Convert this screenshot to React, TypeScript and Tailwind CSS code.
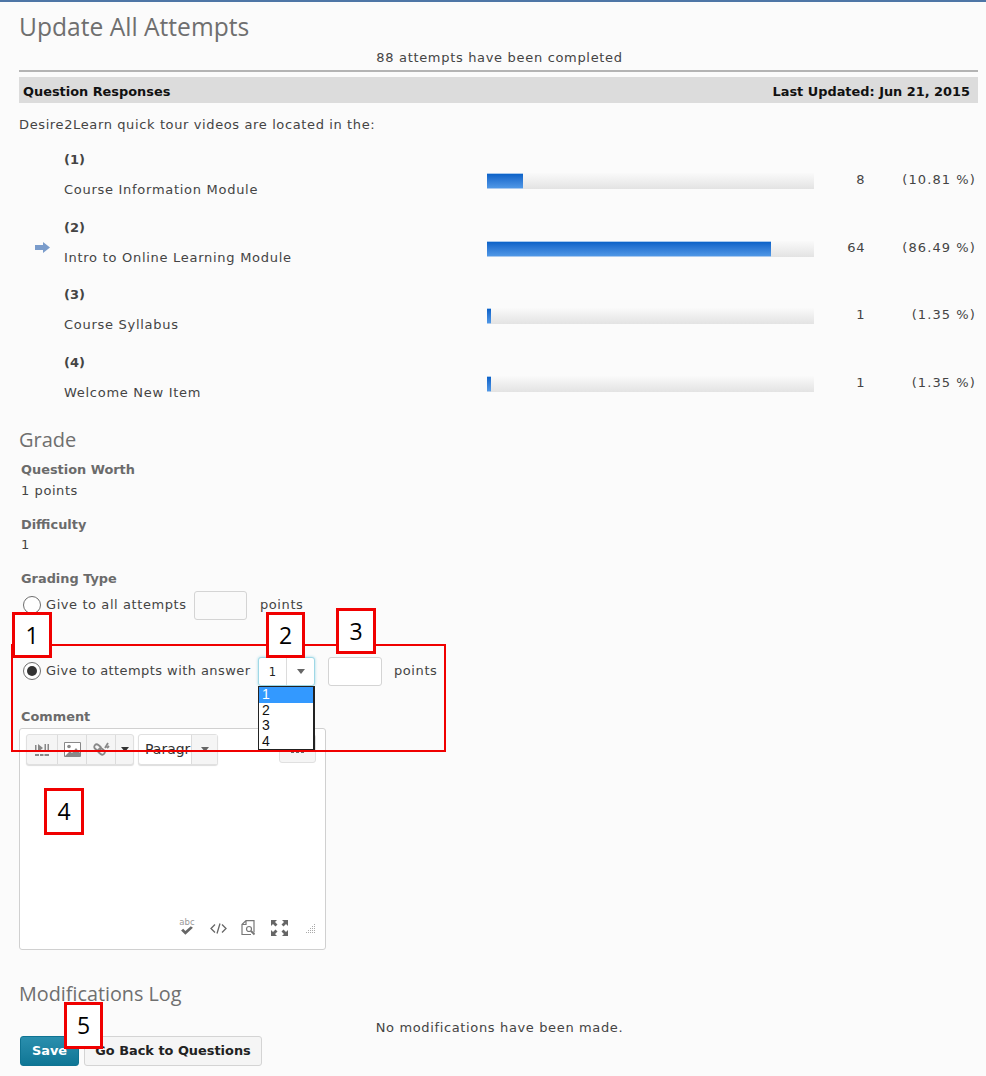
const answers = [
  { label: "(1)", name: "Course Information Module", pct: 11, count: "8", share: "(10.81 %)" },
  { label: "(2)", name: "Intro to Online Learning Module", pct: 87, count: "64", share: "(86.49 %)", correct: true },
  { label: "(3)", name: "Course Syllabus", pct: 1.2, count: "1", share: "(1.35 %)" },
  { label: "(4)", name: "Welcome New Item", pct: 1.2, count: "1", share: "(1.35 %)" },
];

const Radio = ({ checked }: { checked?: boolean }) => (
  <span className="flex h-[18px] w-[18px] shrink-0 items-center justify-center rounded-full border-[1.5px] border-[#6e6e6e] bg-white">
    {checked && <span className="h-[10px] w-[10px] rounded-full bg-[#333]" />}
  </span>
);

const Callout = ({ className, children }: { className: string; children: string }) => (
  <div className={`absolute z-20 flex items-center justify-center border-[3px] border-[#f00000] bg-white font-['Open_Sans',sans-serif] text-[23px] tracking-normal text-black ${className}`}>
    {children}
  </div>
);

const Caret = () => <span className="h-0 w-0 border-x-[4px] border-t-[5px] border-x-transparent border-t-[#666]" />;

const App = () => {
  return (
    <div className="relative h-[1076px] w-[986px] overflow-hidden border-t-2 border-[#4e76a6] bg-[#fbfbfb] px-[19px] font-['DejaVu_Sans',sans-serif] text-[13px] tracking-[0.58px] text-[#444]">
      <h1 className="h-[47px] pt-[8px] font-['Open_Sans',sans-serif] text-[24.6px] leading-[34px] tracking-normal text-[#6f6f6f]">Update All Attempts</h1>
      <p className="h-[17px] pl-[13px] text-center leading-[17px] tracking-[0.68px]">88 attempts have been completed</p>
      <div className="mt-[4px] h-[7px] w-[959px] border-t-2 border-[#b4b4b4]" />
      <div className="flex h-[26px] w-[959px] items-center justify-between bg-[#dcdcdc] px-[4px] pt-[3px] text-[12.9px] font-bold tracking-normal text-[#111]">
        <span>Question Responses</span>
        <span className="pr-[4px]">Last Updated: Jun 21, 2015</span>
      </div>
      <p className="mt-[13px] h-[17px] leading-[17px] tracking-[0.62px]">Desire2Learn quick tour videos are located in the:</p>

      <div className="mt-[9px] w-[959px]">
        {answers.map((a) => (
          <div key={a.label} className="flex h-[67.5px] items-start">
            <div className="flex h-[68px] w-[45px] shrink-0 items-center pl-[16px] pt-[8px]">
              {a.correct && (
                <svg width="15" height="11" viewBox="0 0 15 11">
                  <path d="M0 3h8V0l7 5.5-7 5.5V8H0z" fill="#7a9ccb" />
                </svg>
              )}
            </div>
            <div className="w-[423px] shrink-0 pt-[9px]">
              <div className="h-[17px] font-bold leading-[17px] tracking-normal">{a.label}</div>
              <div className="mt-[13px] h-[17px] whitespace-nowrap leading-[17px] tracking-[0.72px]">{a.name}</div>
            </div>
            <div className="mt-[31px] h-[16px] w-[327px] shrink-0 bg-gradient-to-b from-[#fafafa] to-[#e3e3e3]">
              <div
                className="h-full border-y border-[#a9c9ee] bg-gradient-to-b from-[#0a62c8] to-[#4f97e6]"
                style={{ width: `${a.pct}%` }}
              />
            </div>
            <div className="mt-[29px] w-[51px] shrink-0 text-right leading-[17px]">{a.count}</div>
            <div className="mt-[29px] w-[111px] shrink-0 whitespace-nowrap text-right leading-[17px] tracking-[1.1px]">{a.share}</div>
          </div>
        ))}
      </div>

      <h2 className="mt-[13px] h-[30px] font-['Open_Sans',sans-serif] text-[20px] leading-[30px] tracking-normal text-[#6f6f6f]">Grade</h2>
      <div className="pl-[2px]">
        <div className="mt-[6px] h-[17px] text-[12.9px] font-bold leading-[17px] tracking-normal text-[#6b6b6b]">Question Worth</div>
        <div className="mt-[4px] h-[17px] leading-[17px]">1 points</div>
        <div className="mt-[17px] h-[17px] text-[12.9px] font-bold leading-[17px] tracking-normal text-[#6b6b6b]">Difficulty</div>
        <div className="mt-[3px] h-[17px] leading-[17px]">1</div>
        <div className="mt-[17px] h-[17px] text-[12.9px] font-bold leading-[17px] tracking-normal text-[#6b6b6b]">Grading Type</div>
      </div>

      <div className="mt-[3px] flex h-[30px] items-center pl-[4px]">
        <Radio />
        <span className="ml-[5px] w-[148px] whitespace-nowrap">Give to all attempts</span>
        <span className="h-[29px] w-[53px] rounded-[3px] border border-[#d4d4d4] bg-[#fafafa]" />
        <span className="ml-[13px]">points</span>
      </div>

      <div className="relative mt-[36px] flex h-[30px] items-center pl-[4px]">
        <Radio checked />
        <span className="ml-[5px] w-[212px] whitespace-nowrap tracking-[0.43px]">Give to attempts with answer</span>
        <div className="flex h-[29px] w-[57px] items-center rounded-[3px] border border-[#9fd8e6] bg-white shadow-[0_0_3px_#9fd8e6]">
          <span className="w-[27px] pt-[3px] text-center text-[11.5px] tracking-normal text-[#222]">1</span>
          <span className="flex h-full flex-1 items-center justify-center border-l border-[#dcdcdc]">
            <Caret />
          </span>
        </div>
        <span className="ml-[13px] h-[29px] w-[54px] rounded-[3px] border border-[#d4d4d4] bg-white" />
        <span className="ml-[12px]">points</span>

        <div className="absolute left-[239px] top-[30px] z-10 w-[57px] border border-b-2 border-r-2 border-[#222] bg-white font-['Liberation_Sans',sans-serif] text-[14px] leading-[15.5px] tracking-normal text-[#111]">
          <div className="bg-[#3399ff] pl-[3px] text-white">1</div>
          <div className="pl-[3px]">2</div>
          <div className="pl-[3px]">3</div>
          <div className="pl-[3px]">4</div>
        </div>
      </div>

      <div className="mt-[22px] h-[17px] pl-[2px] text-[12.9px] font-bold leading-[17px] tracking-normal text-[#6b6b6b]">Comment</div>

      <div className="mt-[3px] h-[222px] w-[307px] rounded-[3px] border border-[#d0d0d0] bg-white px-[6px] pt-[5px]">
        <div className="flex items-start">
          <div className="flex h-[31px] w-[108px] rounded-[3px] border border-[#e0e0e0] bg-[#f5f5f5] shadow-[0_1px_1px_#ddd]">
            <span className="flex w-[31px] items-center justify-center border-r border-[#dcdcdc]">
              <svg width="15" height="14" viewBox="0 0 15 14" fill="#888">
                <path d="M0 2h1.5v6H0zM3 1l5 4-5 4zM9.500 1H11v7H9.500zM12.500 1H14v7h-1.500zM0 11h4v2H0zM5 11h3.500v2H5zM9.500 11H14v2H9.500z" />
              </svg>
            </span>
            <span className="flex w-[29px] items-center justify-center border-r border-[#dcdcdc]">
              <svg width="17" height="15" viewBox="0 0 17 15">
                <path d="M.5.500h16v14H.5z" fill="#fff" stroke="#888" />
                <circle cx="5" cy="4.500" r="1.800" fill="#888" />
                <path d="M1 14l5-5 2 2 4-5 4 5v3z" fill="#888" />
              </svg>
            </span>
            <span className="flex w-[29px] items-center justify-center border-r border-[#dcdcdc]">
              <svg width="17" height="15" viewBox="0 0 17 15" fill="none" stroke="#888" strokeWidth="1.800">
                <rect x="1" y="3" width="7" height="5" rx="2.500" transform="rotate(40 4.500 5.500)" />
                <rect x="5" y="7" width="7" height="5" rx="2.500" transform="rotate(40 8.500 9.500)" />
                <path d="M12 6l3-5M14 6l2-2" />
              </svg>
            </span>
            <span className="flex flex-1 items-center justify-center">
              <span className="h-0 w-0 border-x-[4px] border-t-[5px] border-x-transparent border-t-[#333]" />
            </span>
          </div>
          <div className="ml-[4px] flex h-[31px] w-[80px] rounded-[3px] border border-[#e0e0e0] bg-white shadow-[0_1px_1px_#ddd]">
            <span className="w-[52px] overflow-hidden whitespace-nowrap pl-[6px] text-[14px] leading-[29px] tracking-normal text-[#333]">Paragraph</span>
            <span className="flex flex-1 items-center justify-center border-l border-[#dcdcdc] bg-[#f5f5f5]">
              <Caret />
            </span>
          </div>
          <div className="ml-[61px] flex h-[29px] w-[37px] items-center justify-center gap-[2px] rounded-[3px] border border-[#e0e0e0] bg-[#f5f5f5] pt-[6px]">
            <span className="h-[3px] w-[3px] bg-[#666]" />
            <span className="h-[3px] w-[3px] bg-[#666]" />
            <span className="h-[3px] w-[3px] bg-[#666]" />
          </div>
        </div>

        <div className="mt-[155px] flex items-center justify-end pr-[2px]">
          <span className="relative flex h-[16px] w-[14px] items-end justify-center">
            <span className="absolute -top-[2px] text-[8.5px] leading-[8px] tracking-normal text-[#999]">abc</span>
            <svg width="14" height="10" viewBox="0 0 13 9">
              <path d="M1 4l4 4 7-6.500-2-1.500-5 4.500-2-2z" fill="#666" />
            </svg>
          </span>
          <svg className="ml-[16px]" width="17" height="11" viewBox="0 0 17 11" fill="none" stroke="#666" strokeWidth="1.300">
            <path d="M5 1.500L1 5.500l4 4M12 1.500l4 4-4 4M10 .500L7 10.500" />
          </svg>
          <svg className="ml-[14px]" width="16" height="16" viewBox="0 0 16 16" fill="none" stroke="#777" strokeWidth="1.200">
            <path d="M5 .600h8v12M1 4.500L5 .600V4.500H1v10h9" />
            <circle cx="8" cy="9" r="2.500" />
            <path d="M10 11l3.500 3.500" strokeWidth="1.800" />
          </svg>
          <svg className="ml-[14px]" width="17" height="16" viewBox="0 0 17 16" fill="#666">
            <path d="M0 0h6L4 2l2.500 2.500-2 2L2 4 0 6zM17 0v6l-2-2-2.500 2.500-2-2L13 2l-2-2zM0 16v-6l2 2 2.500-2.500 2 2L4 14l2 2zM17 16h-6l2-2-2.500-2.500 2-2L15 12l2-2z" />
          </svg>
          <svg className="ml-[17px] mr-[1px]" width="11" height="11" viewBox="0 0 11 11" fill="#aaa">
            <path d="M9 1h1v1H9zM7 3h1v1H7zM9 3h1v1H9zM5 5h1v1H5zM7 5h1v1H7zM9 5h1v1H9zM3 7h1v1H3zM5 7h1v1H5zM7 7h1v1H7zM9 7h1v1H9zM1 9h1v1H1zM3 9h1v1H3zM5 9h1v1H5zM7 9h1v1H7zM9 9h1v1H9z" />
          </svg>
        </div>
      </div>

      <h2 className="mt-[29px] h-[30px] font-['Open_Sans',sans-serif] text-[19.8px] leading-[30px] tracking-normal text-[#6f6f6f]">Modifications Log</h2>
      <p className="mt-[10px] h-[17px] pl-[13px] text-center leading-[17px] tracking-[0.64px]">No modifications have been made.</p>

      <div className="flex gap-[5px] pl-[1px]">
        <button className="h-[30px] w-[59px] rounded-[3px] border border-[#0f7392] bg-gradient-to-b from-[#2a8fae] to-[#0e7695] text-[12.9px] font-bold tracking-normal text-white">Save</button>
        <button className="h-[30px] w-[178px] rounded-[3px] border border-[#d4d4d4] bg-[#f5f5f5] text-[12.9px] font-bold tracking-normal text-[#222]">Go Back to Questions</button>
      </div>

      <div className="pointer-events-none absolute left-[11px] top-[642px] z-10 h-[108px] w-[435px] border-2 border-[#f00000]" />
      <Callout className="left-[12px] top-[610px] h-[46px] w-[40px]">1</Callout>
      <Callout className="left-[266px] top-[610px] h-[46px] w-[39px]">2</Callout>
      <Callout className="left-[336px] top-[606px] h-[46px] w-[40px]">3</Callout>
      <Callout className="left-[44px] top-[786px] h-[47px] w-[40px]">4</Callout>
      <Callout className="left-[64px] top-[1000px] h-[47px] w-[39px]">5</Callout>
    </div>
  );
};

export default App;
